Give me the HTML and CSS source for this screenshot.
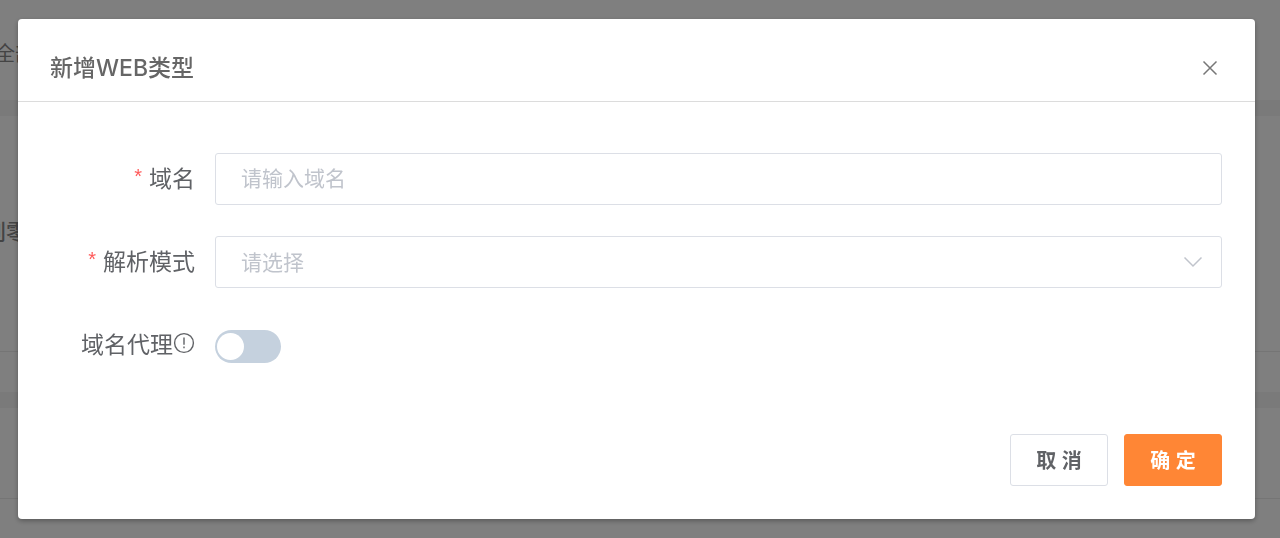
FILE: index.html
```html
<!DOCTYPE html>
<html lang="zh-CN">
<head>
  <meta charset="UTF-8" />
  <title>新增WEB类型</title>
  <meta name="viewport" content="width=device-width, initial-scale=1.0" />
  <link rel="stylesheet" href="styles.css">
</head>
<body>

<!-- Page behind the dialog -->
<div class="page" aria-hidden="true">
  <div class="panel panel-top"><span class="crumb">全部</span></div>
  <div class="panel panel-info">
    <div class="info-text"><span>到零</span></div>
    <div class="info-foot"></div>
  </div>
  <div class="panel panel-list">
    <div class="list-row"></div>
    <div class="list-row"></div>
  </div>
</div>

<div class="overlay">
  <div class="dialog" role="dialog" aria-labelledby="dialogTitle">
    <div class="dialog-header">
      <h2 id="dialogTitle">新增WEB类型</h2>
      <button type="button" class="close" aria-label="关闭">
        <svg width="16" height="16" viewBox="0 0 16 16" fill="none" stroke="#777" stroke-width="1.5">
          <path d="M1.5 1.5L14.5 14.5M14.5 1.5L1.5 14.5" />
        </svg>
      </button>
    </div>

    <form class="dialog-body">
      <div class="form-item required">
        <label for="domain">域名</label>
        <input type="text" id="domain" class="control" placeholder="请输入域名" />
      </div>

      <div class="form-item required">
        <label for="mode">解析模式</label>
        <div class="select">
          <select id="mode" class="control">
            <option value="">请选择</option>
          </select>
          <svg class="arrow" width="20" height="12" viewBox="0 0 20 12" fill="none" stroke="#c0c4cc" stroke-width="1.5">
            <path d="M1.5 1.5L10 10L18.5 1.5" />
          </svg>
        </div>
      </div>

      <div class="form-item">
        <label for="proxy">域名代理<svg class="tip" width="22" height="22" viewBox="0 0 22 22" fill="none" stroke="#606266" stroke-width="1.4">
            <circle cx="11" cy="11" r="9.4" />
            <path d="M11 5.5V12.8M11 14.5V16.2" />
          </svg></label>
        <input type="checkbox" id="proxy" class="switch" />
      </div>

      <div class="dialog-footer">
        <button type="button" class="btn">取 消</button>
        <button type="button" class="btn btn-primary">确 定</button>
      </div>
    </form>
  </div>
</div>

</body>
</html>
```
FILE: styles.css
```css
* { box-sizing: border-box; }
body {
  margin: 0;
  font-family: "Liberation Sans", "Noto Sans CJK SC", sans-serif;
  color: #606266;
  background: #f4f4f4;
  overflow: hidden;
}

/* page behind */
.page {
  height: 100vh;
  overflow: hidden;
  font-size: 20px;
  color: #888;
}
.panel {
  background: #fff;
  margin-bottom: 16px;
}
.panel-top {
  height: 100px;
  padding-top: 38px;
}
.crumb {
  margin-left: -5px;
}
.info-text {
  height: 236px;
  padding-top: 98px;
  border-bottom: 1px solid #ebebeb;
  font-size: 22px;
  font-weight: 500;
}
.info-text span {
  margin-left: -16px;
}
.info-foot {
  height: 40px;
}
.list-row {
  height: 91px;
  border-bottom: 1px solid #ebebeb;
}

/* dialog */
.overlay {
  position: fixed;
  inset: 0;
  padding: 19px 25px 20px 18px;
  background: rgba(0, 0, 0, 0.5);
}
.dialog {
  background: #fff;
  border-radius: 4px;
  box-shadow: 0 2px 5px rgba(0, 0, 0, 0.3);
}
.dialog-header {
  display: flex;
  justify-content: space-between;
  align-items: center;
  padding: 32px 32px 16px;
  border-bottom: 1px solid #dcdcdc;
}
h2 {
  margin: 0;
  font-family: Inter, "Noto Sans CJK SC", sans-serif;
  font-size: 23px;
  line-height: 34px;
  font-weight: 500;
  color: #666;
}
.close {
  display: flex;
  padding: 5px;
  border: none;
  background: none;
  cursor: pointer;
}
.dialog-body {
  padding: 51px 33px 33px;
}
.form-item {
  display: flex;
  align-items: center;
  height: 52px;
  margin-bottom: 31px;
}
.form-item label {
  display: flex;
  flex: none;
  justify-content: flex-end;
  align-items: center;
  width: 144px;
  margin-right: 20px;
  padding-bottom: 5px;
  font-size: 23px;
  white-space: nowrap;
}
.required label::before {
  content: "*";
  margin-right: 7px;
  font-size: 20px;
  color: #ff5a5a;
}
.control {
  display: block;
  flex: 1;
  width: 100%;
  height: 52px;
  padding: 0 25px;
  border: 1px solid #dcdfe6;
  border-radius: 3px;
  background: #fff;
  font-family: inherit;
  font-size: 21px;
  color: #c0c4cc;
  outline: none;
}
.control::placeholder {
  color: #c0c4cc;
}
.select {
  position: relative;
  flex: 1;
}
.select select {
  appearance: none;
}
.arrow {
  position: absolute;
  right: 19px;
  top: 20px;
  pointer-events: none;
}
.switch {
  appearance: none;
  width: 66px;
  height: 33px;
  margin: 3px 0 0;
  padding: 3px 2px;
  border-radius: 17px;
  background: #c5d1de;
  cursor: pointer;
}
.switch::before {
  content: "";
  display: block;
  width: 27px;
  height: 27px;
  border-radius: 50%;
  background: #fff;
}
.switch:checked {
  background: #ff8635;
}
.switch:checked::before {
  margin-left: auto;
}
.dialog-footer {
  display: flex;
  justify-content: flex-end;
  gap: 16px;
  margin-top: 63px;
}
.btn {
  width: 98px;
  height: 52px;
  padding: 0 0 2px;
  border: 1px solid #dcdfe6;
  border-radius: 3px;
  background: #fff;
  color: #606266;
  font-family: inherit;
  font-size: 20px;
  font-weight: bold;
  cursor: pointer;
}
.btn-primary {
  border-color: #ff8635;
  background: #ff8635;
  color: #fff;
}
```
